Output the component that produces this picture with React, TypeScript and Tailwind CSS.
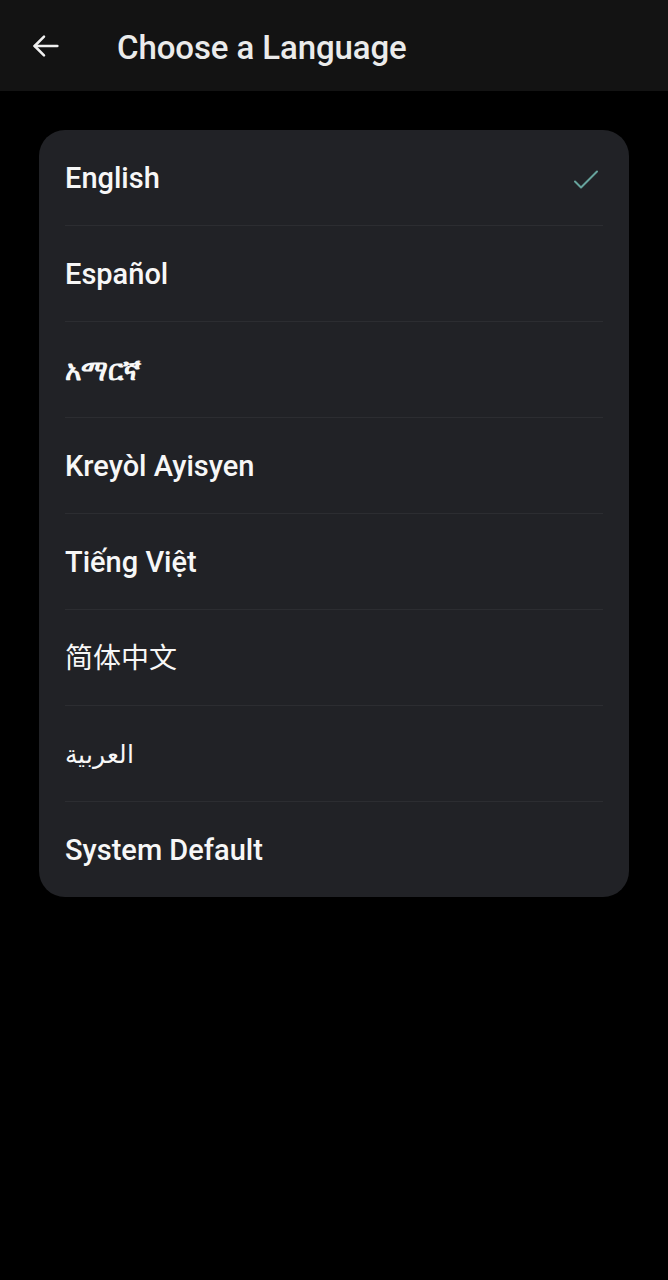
import React from "react";

const langs = [
  { t: "English", c: "text-[29px] font-medium" },
  { t: "Español", c: "text-[29px] font-medium" },
  { t: "አማርኛ", c: "text-[28px] font-bold" },
  { t: "Kreyòl Ayisyen", c: "text-[29px] font-medium" },
  { t: "Tiếng Việt", c: "text-[29px] font-medium" },
  { t: "简体中文", c: "text-[28px] font-normal" },
  { t: "العربية", c: "text-[25px] font-normal" },
  { t: "System Default", c: "text-[29px] font-medium" },
];

export default function App() {
  return (
    <div
      className="w-[668px] h-[1280px] bg-black"
      style={{ fontFamily: 'Roboto, "Noto Sans", "Noto Sans CJK SC", sans-serif' }}
    >
      <div className="h-[91px] bg-[#131313] flex items-center">
        <div className="w-[117px] flex items-center pl-[30px] pt-[1px]">
          <svg width="32" height="32" viewBox="0 0 24 24" fill="none" stroke="#f0f0f0" strokeWidth="1.9" strokeLinecap="round" strokeLinejoin="round">
            <path d="M20.5 12H3.5" />
            <path d="M10.5 5 3.5 12l7 7" />
          </svg>
        </div>
        <div className="text-[33px] font-medium text-[#ebebeb] tracking-[-0.1px] leading-none pt-[4px]">
          Choose a Language
        </div>
      </div>
      <div className="px-[39px] pt-[39px]">
        <div className="bg-[#212226] rounded-[26px] px-[26px]">
          {langs.map((l, i) => (
            <div
              key={l.t}
              className={`flex items-center justify-between pt-[2px] ${i < langs.length - 1 ? "h-[96px] border-b border-[#2c2d31]" : "h-[95px]"}`}
            >
              <span className={`${l.c} text-[#f7f7f7] leading-none`}>{l.t}</span>
              {i === 0 && (
                <svg width="28" height="28" viewBox="0 0 28 28" fill="none" stroke="#66a39c" strokeWidth="2" strokeLinecap="round" strokeLinejoin="round" className="mr-[3px]">
                  <path d="M3 16.5 9 22.5 25 6.5" />
                </svg>
              )}
            </div>
          ))}
        </div>
      </div>
    </div>
  );
}
